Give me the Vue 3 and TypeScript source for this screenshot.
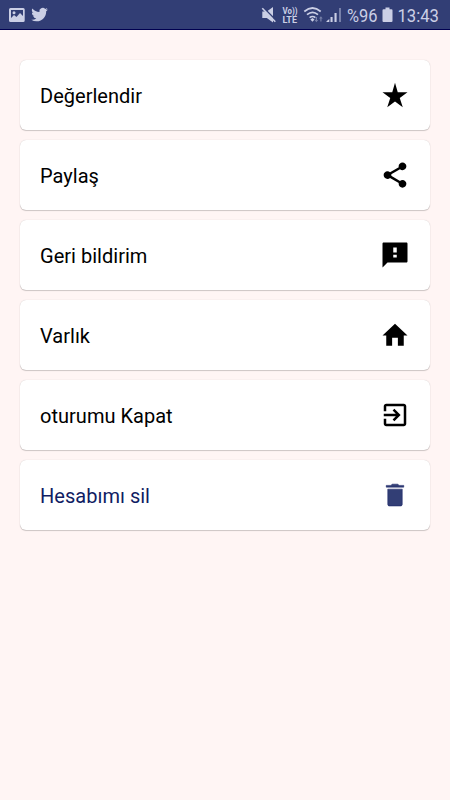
<script setup lang="ts">
interface MenuItem {
  label: string
  icon: string
  danger?: boolean
}

const items: MenuItem[] = [
  {
    label: 'Değerlendir',
    icon: 'M12 2.200 14.200 9.700H22l-6.200 4.600 2.400 7.500L12 17.200l-6.200 4.600 2.400-7.500L2 9.700h7.800z',
  },
  {
    label: 'Paylaş',
    icon: 'M18 15.900c-.8 0-1.500.3-2 .8L9 12.600c.1-.2.100-.4.100-.6s0-.4-.100-.6L16 7.300c.500.500 1.200.800 2 .800 1.700 0 3.100-1.400 3.100-3.100S19.700 1.900 18 1.900 14.900 3.300 14.900 5c0 .200 0 .500.100.700L8 9.700c-.500-.500-1.200-.800-2-.800-1.700 0-3.100 1.400-3.100 3.100s1.400 3.100 3.100 3.100c.800 0 1.500-.3 2-.8l7 4.100c-.100.200-.100.400-.100.600 0 1.700 1.400 3.100 3.100 3.100s3.100-1.400 3.100-3.100-1.400-3.100-3.100-3.100z',
  },
  {
    label: 'Geri bildirim',
    icon: 'M21 2H3c-.6 0-1 .4-1 1v19l4-4h15c.6 0 1-.4 1-1V3c0-.6-.4-1-1-1zm-7.600 12h-2.800v-2.200h2.800V14zm0-4h-2.800V6h2.800v4z',
  },
  { label: 'Varlık', icon: 'M9.700 20.500v-6.300h4.600v6.300H19V12.300h3L12 3 2 12.300h3v8.200z' },
  {
    label: 'oturumu Kapat',
    icon: 'M10.090 15.590 11.500 17l5-5-5-5-1.410 1.410L12.670 11H3v2h9.670l-2.580 2.590zM19 3H5c-1.110 0-2 .9-2 2v4h2V5h14v14H5v-4H3v4c0 1.100.89 2 2 2h14c1.100 0 2-.9 2-2V5c0-1.100-.9-2-2-2z',
  },
  {
    label: 'Hesabımı sil',
    icon: 'M6.200 19.500c0 .7.600 1.300 1.300 1.300h9c.7 0 1.300-.6 1.300-1.300V7.300H6.200zM19 4.300h-3.700l-1-1H9.700l-1 1H5v1.400h14z',
    danger: true,
  },
]
</script>

<template>
  <div class="screen">
    <header class="status">
      <svg class="status-art" width="450" height="30" viewBox="0 0 450 30">
        <!-- picture notification -->
        <path
          fill-rule="evenodd"
          d="M10.500 8h12.700a1.500 1.500 0 0 1 1.500 1.500v11a1.500 1.500 0 0 1-1.500 1.500H10.500A1.500 1.500 0 0 1 9 20.500v-11A1.500 1.500 0 0 1 10.500 8zM11 10v8l3-3 2.500 2 3.500-4 3 3v-6z"
        />
        <circle cx="14" cy="12.700" r="1.500" />
        <!-- bird notification -->
        <path
          transform="translate(31.300 6.300) scale(.69)"
          d="M23.950 4.570a10 10 0 0 1-2.820.780 4.960 4.960 0 0 0 2.160-2.730c-.950.560-2 .960-3.130 1.190a4.920 4.920 0 0 0-8.380 4.480C7.690 8.090 4.070 6.130 1.640 3.160a4.920 4.920 0 0 0 1.520 6.570 4.900 4.900 0 0 1-2.230-.610v.060a4.920 4.920 0 0 0 3.950 4.830 5 5 0 0 1-2.210.080 4.940 4.940 0 0 0 4.600 3.420A9.870 9.870 0 0 1 0 19.540a14 14 0 0 0 7.550 2.210c9.050 0 14-7.500 14-13.980v-.640a9.940 9.940 0 0 0 2.460-2.550z"
        />
        <!-- muted speaker -->
        <path d="M262.300 11.500h4.500l6.200-4.500v15.500l-6.200-4.500h-4.500z" />
        <path class="cut" d="m263.500 7.700 12.500 12.500" />
        <path class="line" d="m262.300 8.300 13 13.400" />
        <!-- VoLTE -->
        <text class="tiny" x="282.500" y="13.800" textLength="15" lengthAdjust="spacingAndGlyphs">Vo))</text>
        <text class="tiny" x="282.500" y="22.500" textLength="14.500" lengthAdjust="spacingAndGlyphs">LTE</text>
        <!-- wifi -->
        <path class="wave" d="M304.300 11.500q8.200-7 16.400 0M307 14.700q5.500-4.600 11 0M309.600 17.600q2.900-2.200 5.800 0" />
        <path d="m310.300 19.500 2.200-1.400 2 1.400-2 2.300z" />
        <path class="dim" d="M315.800 17h1.200v3h1.200l-1.800 2.200-1.800-2.200h1.200zM320.300 21.500h1.200v-3h1.200l-1.800-2.300-1.800 2.300h1.200z" />
        <!-- signal -->
        <path d="M326.500 22v-.8l2.800-2.200V22zM330.500 17h2.100V22h-2.100zM334.500 13h2.100v9h-2.100z" />
        <path class="dim" d="M339 8h2v14h-2z" />
        <text class="big" x="347" y="22.200" textLength="30.500" lengthAdjust="spacingAndGlyphs">%96</text>
        <!-- battery -->
        <path d="M385.500 7.500h4v1.700h2a1 1 0 0 1 1 1V21a1 1 0 0 1-1 1h-8a1 1 0 0 1-1-1V10.200a1 1 0 0 1 1-1h2z" />
        <text class="big" x="397.500" y="22.200" textLength="41.500" lengthAdjust="spacingAndGlyphs">13:43</text>
      </svg>
    </header>
    <main class="menu">
      <button v-for="item in items" :key="item.label" class="card" :class="{ danger: item.danger }">
        <span>{{ item.label }}</span>
        <svg class="icon" viewBox="0 0 24 24"><path :d="item.icon" /></svg>
      </button>
    </main>
  </div>
</template>

<style scoped>
.screen {
  width: 450px;
  height: 800px;
  overflow: hidden;
  background: #fff5f4;
  font-family: Roboto, sans-serif;
}
.status {
  box-sizing: border-box;
  height: 30px;
  background: #323e75;
  border-bottom: 1px solid #000050;
}
.status-art {
  display: block;
  fill: #cbcfe5;
}
.cut {
  stroke: #323e75;
  stroke-width: 1.6;
}
.line {
  stroke: #cbcfe5;
  stroke-width: 1.6;
}
.wave {
  fill: none;
  stroke: #cbcfe5;
  stroke-width: 1.7;
}
.dim {
  fill: #7780a9;
}
.tiny {
  font-size: 8.4px;
  font-weight: 700;
}
.big {
  font-size: 19px;
}
.menu {
  display: flex;
  flex-direction: column;
  gap: 10px;
  padding: 30px 20px;
}
.card {
  display: flex;
  align-items: center;
  justify-content: space-between;
  height: 70px;
  padding: 0 20px;
  border: 0;
  border-radius: 6px;
  background: #fff;
  box-shadow: 0 1px 1px rgba(0, 0, 0, 0.18), 0 0 1px rgba(0, 0, 0, 0.22);
  color: #000;
  font: 400 20px/24px Roboto, sans-serif;
  letter-spacing: 0.02px;
}
.card span {
  padding-top: 2px;
}
.icon {
  width: 30px;
  height: 30px;
  fill: currentColor;
}
.danger {
  color: #101d63;
}
.danger .icon {
  fill: #323e75;
  stroke: #101d63;
  stroke-width: 0.4;
}
</style>
